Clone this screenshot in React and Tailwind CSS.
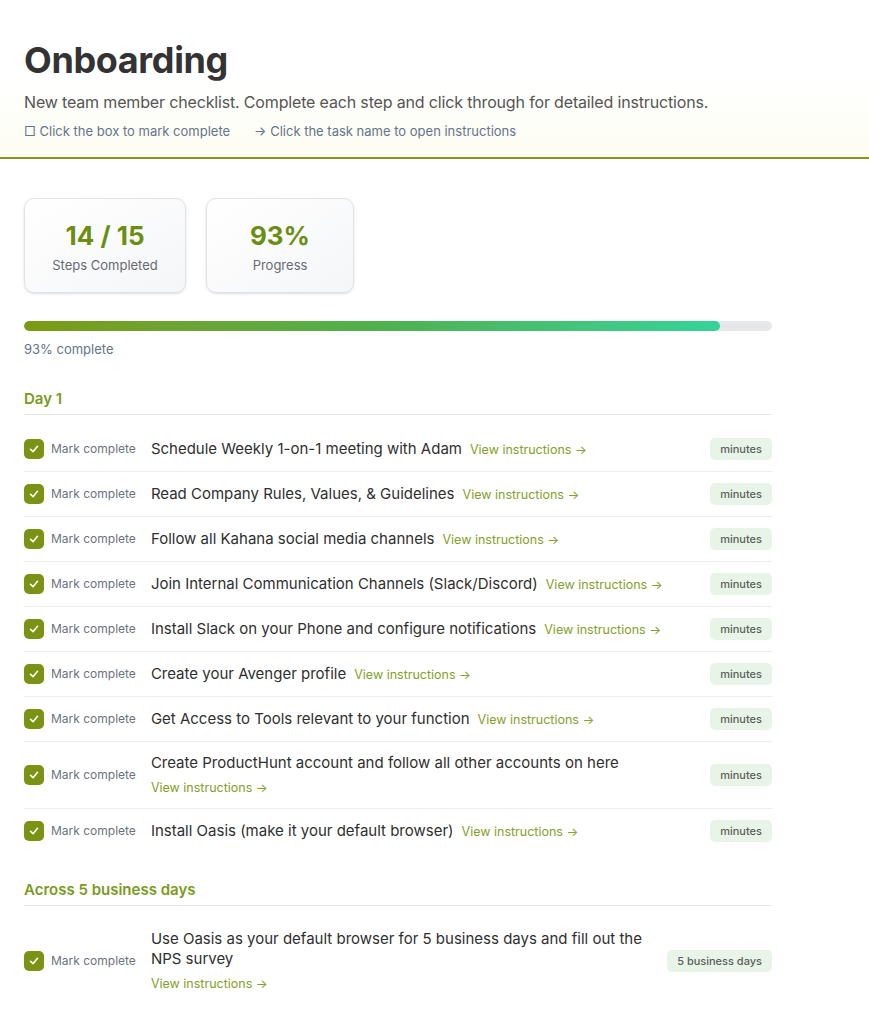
import React from "react";

const day1 = [
  "Schedule Weekly 1-on-1 meeting with Adam",
  "Read Company Rules, Values, & Guidelines",
  "Follow all Kahana social media channels",
  "Join Internal Communication Channels (Slack/Discord)",
  "Install Slack on your Phone and configure notifications",
  "Create your Avenger profile",
  "Get Access to Tools relevant to your function",
  "Create ProductHunt account and follow all other accounts on here",
  "Install Oasis (make it your default browser)",
];

const week = [
  {
    title: "Use Oasis as your default browser for 5 business days and fill out the NPS survey",
    badge: "5 business days",
  },
];

function Check() {
  return (
    <div className="w-5 h-5 shrink-0 rounded-[5px] bg-[#7a9314] flex items-center justify-center">
      <svg width="12" height="12" viewBox="0 0 24 24" fill="none" stroke="white" strokeWidth="3.2" strokeLinecap="round" strokeLinejoin="round">
        <polyline points="5 12.5 10 17.5 19 6.5" />
      </svg>
    </div>
  );
}

function TaskRow({ title, badge = "minutes", last }) {
  return (
    <div className={`flex items-center py-[11px] ${last ? "" : "border-b border-[#ededed]"}`}>
      <Check />
      <span className="ml-[7px] text-[12px] text-[#6b7280] whitespace-nowrap shrink-0">Mark complete</span>
      <div className="ml-[15px] flex-1 min-w-0 flex flex-wrap items-baseline gap-x-2 gap-y-1.5">
        <span className="text-[15px] leading-5 text-[#2f2f2f]">{title}</span>
        <a className="text-[12.5px] leading-[18px] text-[#83a02a] whitespace-nowrap cursor-pointer">View instructions →</a>
      </div>
      <span className="ml-3 shrink-0 rounded-[5px] bg-[#e9f4e9] px-2.5 py-[3px] text-[11px] leading-4 font-medium text-[#595f59]">
        {badge}
      </span>
    </div>
  );
}

function Section({ title, children }) {
  return (
    <div>
      <h2 className="text-[15px] leading-[22px] font-semibold text-[#7a9a1c] pb-1 border-b border-[#e8e8e8]">{title}</h2>
      <div className="mt-3">{children}</div>
    </div>
  );
}

export default function App() {
  return (
    <div className="min-h-screen bg-white" style={{ fontFamily: "Inter, 'Noto Sans', sans-serif" }}>
      {/* Header */}
      <header className="px-6 pt-10 pb-4 border-b-2 border-[#7d9a1f] bg-gradient-to-b from-white via-white to-[#fdfdf3]">
        <h1 className="text-[36px] leading-10 font-bold text-[#333333] tracking-[-0.01em]">Onboarding</h1>
        <p className="mt-2.5 text-[16px] leading-6 text-[#555555] tracking-[-0.01em]">
          New team member checklist. Complete each step and click through for detailed instructions.
        </p>
        <div className="mt-[7px] flex gap-6 text-[13px] leading-5 text-[#64748b]">
          <span>□ Click the box to mark complete</span>
          <span>→ Click the task name to open instructions</span>
        </div>
      </header>

      <main className="px-6 pt-[39px] pb-8 w-[796px]">
        {/* Stats */}
        <div className="flex gap-5">
          <div className="w-[162px] h-[95px] rounded-[10px] border border-[#dfe2e6] bg-gradient-to-br from-white to-[#f5f6f8] shadow-sm flex flex-col items-center pt-[21px]">
            <div className="text-[26px] leading-8 font-bold text-[#6b8e12]">14 / 15</div>
            <div className="mt-1 text-[13px] leading-[18px] text-[#666b70]">Steps Completed</div>
          </div>
          <div className="w-[148px] h-[95px] rounded-[10px] border border-[#dfe2e6] bg-gradient-to-br from-white to-[#f5f6f8] shadow-sm flex flex-col items-center pt-[21px]">
            <div className="text-[26px] leading-8 font-bold text-[#6b8e12]">93%</div>
            <div className="mt-1 text-[13px] leading-[18px] text-[#666b70]">Progress</div>
          </div>
        </div>

        {/* Progress */}
        <div className="mt-7 h-2.5 rounded-full bg-[#e6e7e9] overflow-hidden">
          <div className="h-full rounded-full bg-gradient-to-r from-[#7c9a0e] via-[#4fb04d] to-[#34d399]" style={{ width: "93%" }} />
        </div>
        <div className="mt-[9px] text-[13px] leading-[18px] text-[#64748b]">93% complete</div>

        <div className="mt-[30px]">
          <Section title="Day 1">
            {day1.map((t, i) => (
              <TaskRow key={t} title={t} last={i === day1.length - 1} />
            ))}
          </Section>
        </div>

        <div className="mt-[26px]">
          <Section title="Across 5 business days">
            {week.map((t, i) => (
              <TaskRow key={t.title} title={t.title} badge={t.badge} last={i === week.length - 1} />
            ))}
          </Section>
        </div>
      </main>
    </div>
  );
}
